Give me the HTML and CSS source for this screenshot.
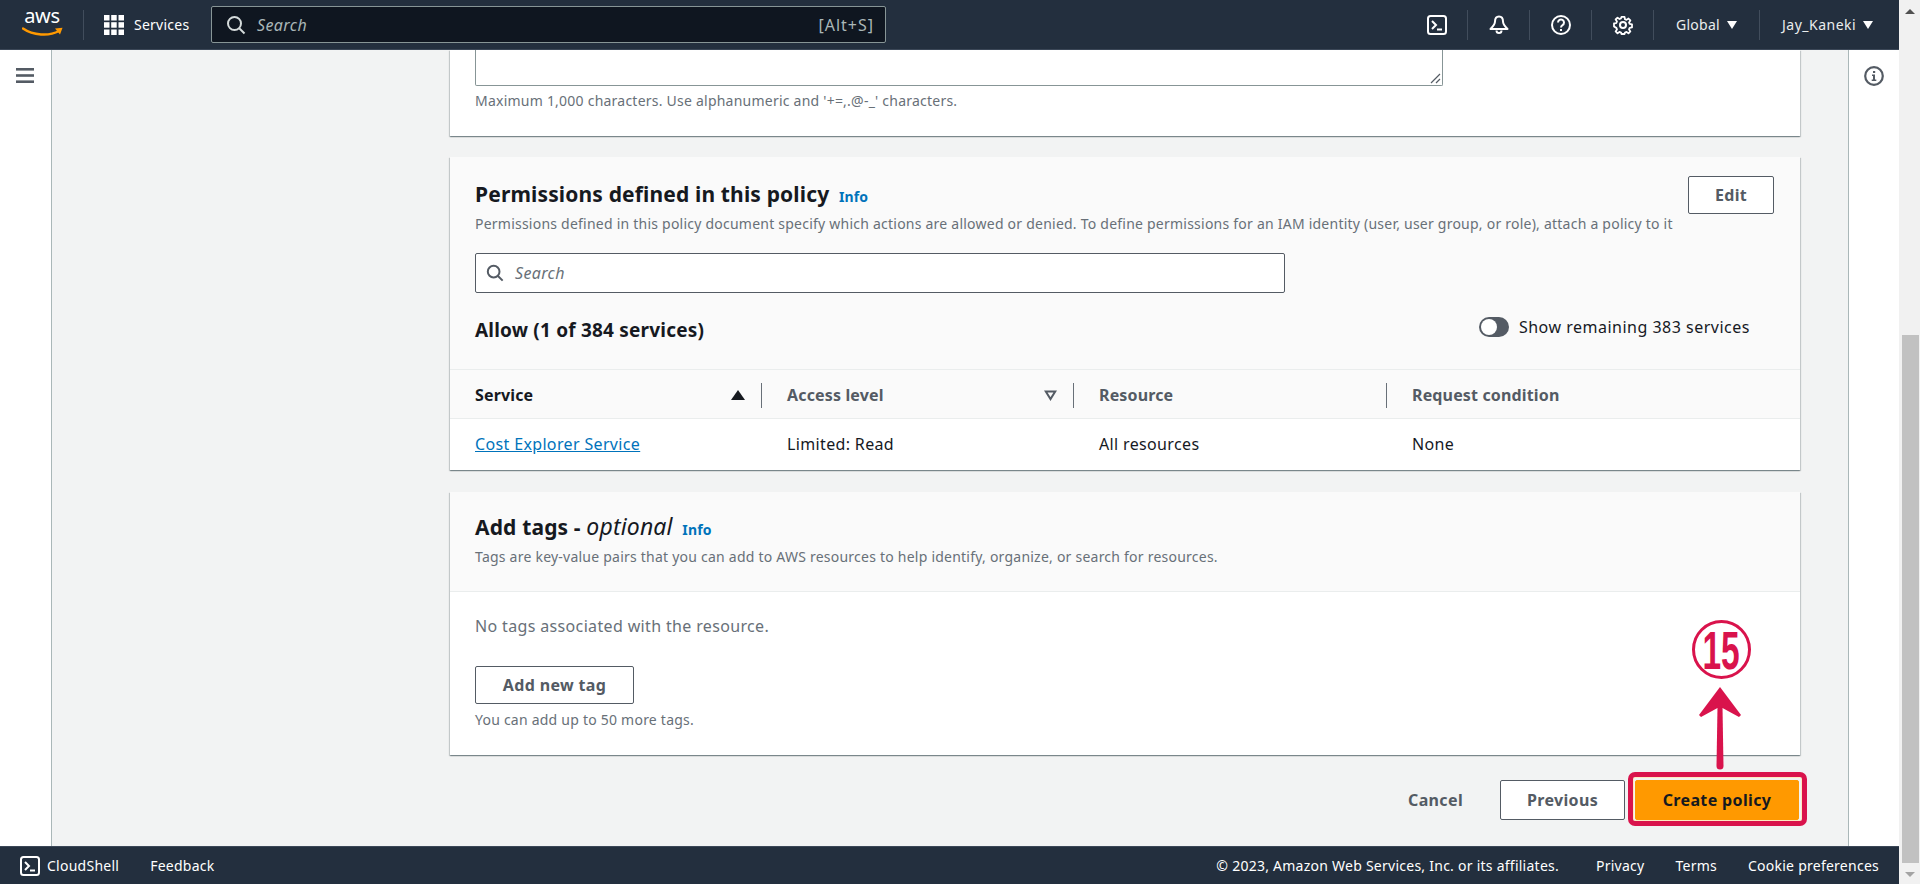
FILE: index.html
```html
<!DOCTYPE html>
<html lang="en">
<head>
    <meta charset="UTF-8">
    <title>Create policy | IAM</title>
    <link rel="stylesheet" href="styles.css">
</head>
<body>
    <div class="app">
        <header class="topbar">
            <div class="logo">
                <span class="logo-text">aws</span>
                <svg class="logo-smile" width="42" height="10" viewBox="0 0 42 10"><path d="M1 1.500C11 8.500 27 9.500 37 4" fill="none" stroke="#f90" stroke-width="2.400" stroke-linecap="round"/><path d="M33 1.500L40.500 .8 38 7.500" fill="#f90"/></svg>
            </div>
            <span class="topbar-sep sep-logo"></span>
            <svg class="grid-icon" width="20" height="20" viewBox="0 0 20 20" fill="#fff"><rect width="5.500" height="5.500"/><rect x="7.200" width="5.500" height="5.500"/><rect x="14.500" width="5.500" height="5.500"/><rect y="7.200" width="5.500" height="5.500"/><rect x="7.200" y="7.200" width="5.500" height="5.500"/><rect x="14.500" y="7.200" width="5.500" height="5.500"/><rect y="14.500" width="5.500" height="5.500"/><rect x="7.200" y="14.500" width="5.500" height="5.500"/><rect x="14.500" y="14.500" width="5.500" height="5.500"/></svg>
            <span class="services">Services</span>
            <div class="top-search">
                <svg width="20" height="20" viewBox="0 0 20 20" fill="none" stroke="#d5dbdb" stroke-width="2"><circle cx="8.500" cy="8.500" r="6.500"/><path d="M13 13l5.500 5.500"/></svg>
                <span class="top-search-text">Search</span>
                <span class="top-search-key">[Alt+S]</span>
            </div>
            <div class="top-right">
                <span class="top-item"><svg width="20" height="20" viewBox="0 0 20 20" fill="none" stroke="#fff" stroke-width="2"><rect x="1" y="1" width="18" height="18" rx="2.500"/><path d="M5 6l4 4-4 4M10 14.500h5"/></svg></span>
                <span class="topbar-sep"></span>
                <span class="top-item"><svg width="20" height="20" viewBox="0 0 20 20" fill="none" stroke="#fff" stroke-width="2" stroke-linejoin="round"><path d="M10 1.500c-3 0-4 2.500-4 5 0 3-2 5-4.500 7.500h17c-2.500-2.500-4.500-4.500-4.500-7.500 0-2.500-1-5-4-5z"/><path d="M7.500 15.500a2.500 2.500 0 0 0 5 0"/></svg></span>
                <span class="topbar-sep"></span>
                <span class="top-item"><svg width="20" height="20" viewBox="0 0 20 20" fill="none" stroke="#fff" stroke-width="2"><circle cx="10" cy="10" r="9"/><path d="M7 7.500a3 3 0 1 1 4.500 2.600c-1 .6-1.500 1-1.500 2.400"/><path d="M10 14v2"/></svg></span>
                <span class="topbar-sep"></span>
                <span class="top-item"><svg width="20" height="20" viewBox="0 0 20 20" fill="none" stroke="#fff" stroke-width="2" stroke-linejoin="round"><path d="M8.300 1h3.400l.5 2.600 1.700.7 2.200-1.500 2.100 2.100-1.500 2.200.7 1.700 2.600.5v3.400l-2.600.5-.7 1.700 1.500 2.200-2.100 2.100-2.200-1.500-1.700.7-.5 1.600H8.300l-.5-1.600-1.700-.7-2.200 1.500-2.100-2.100 1.500-2.200-.7-1.700L0 11.700V8.300l2.600-.5.7-1.700-1.500-2.200 2.100-2.100 2.200 1.500 1.700-.7z" transform="translate(1 1) scale(.9)"/><circle cx="10" cy="10" r="3"/></svg></span>
                <span class="topbar-sep"></span>
                <span class="top-menu top-global">Global <i class="caret"></i></span>
                <span class="topbar-sep"></span>
                <span class="top-menu top-user">Jay_Kaneki <i class="caret"></i></span>
            </div>
        </header>

        <div class="middle">
            <aside class="rail rail-left">
                <svg width="18" height="15" viewBox="0 0 18 15" fill="#545b64"><rect width="18" height="2.600"/><rect y="6.200" width="18" height="2.600"/><rect y="12.400" width="18" height="2.600"/></svg>
            </aside>

            <main class="content">
                <section class="card card-cut">
                    <div class="textarea-stub"><svg class="resize-grip" width="11" height="11" viewBox="0 0 11 11" stroke="#545b64" stroke-width="1.200"><path d="M1 10L10 1M6 10l4-4"/></svg></div>
                    <p class="hint">Maximum 1,000 characters. Use alphanumeric and '+=,.@-_' characters.</p>
                </section>

                <section class="card card-perms">
                    <div class="card-head perms-head">
                        <div class="perms-top">
                            <div>
                                <h2 class="card-title">Permissions defined in this policy <a class="info">Info</a></h2>
                                <p class="card-desc">Permissions defined in this policy document specify which actions are allowed or denied. To define permissions for an IAM identity (user, user group, or role), attach a policy to it</p>
                            </div>
                            <button class="btn btn-edit">Edit</button>
                        </div>
                        <div class="perm-search">
                            <svg width="18" height="18" viewBox="0 0 20 20" fill="none" stroke="#545b64" stroke-width="2.200"><circle cx="8.500" cy="8.500" r="6.500"/><path d="M13 13l5.500 5.500"/></svg>
                            <span>Search</span>
                        </div>
                        <div class="allow-row">
                            <h3 class="allow-title">Allow (1 of 384 services)</h3>
                            <div class="toggle-wrap"><span class="toggle"></span><span>Show remaining 383 services</span></div>
                        </div>
                    </div>
                    <div class="tbl tbl-head">
                        <div class="th th-active">Service <i class="sort-up"></i></div>
                        <div class="th">Access level <svg class="sort-down" width="13" height="11" viewBox="0 0 13 11" fill="none" stroke="#545b64" stroke-width="2"><path d="M1.800 1.500h9.400L6.500 9z"/></svg></div>
                        <div class="th">Resource</div>
                        <div class="th">Request condition</div>
                    </div>
                    <div class="tbl tbl-row">
                        <div class="td"><a class="link">Cost Explorer Service</a></div>
                        <div class="td">Limited: Read</div>
                        <div class="td">All resources</div>
                        <div class="td">None</div>
                    </div>
                </section>

                <section class="card card-tags">
                    <div class="card-head tags-head">
                        <h2 class="card-title">Add tags - <em>optional</em> <a class="info">Info</a></h2>
                        <p class="card-desc">Tags are key-value pairs that you can add to AWS resources to help identify, organize, or search for resources.</p>
                    </div>
                    <div class="tags-body">
                        <p class="no-tags">No tags associated with the resource.</p>
                        <button class="btn btn-add">Add new tag</button>
                        <p class="hint hint-tags">You can add up to 50 more tags.</p>
                    </div>
                </section>

                <div class="actions">
                    <button class="btn-cancel">Cancel</button>
                    <button class="btn btn-prev">Previous</button>
                    <button class="btn btn-create">Create policy</button>
                </div>
            </main>

            <aside class="rail rail-right">
                <svg width="20" height="20" viewBox="0 0 20 20"><circle cx="10" cy="10" r="8.800" fill="none" stroke="#545b64" stroke-width="2.200"/><path d="M8 8.500h3v5h1.300v1.500H7.700v-1.500H9V10H8zM9 5h2.200v2H9z" fill="#545b64"/></svg>
            </aside>
        </div>

        <footer class="footer">
            <svg width="20" height="20" viewBox="0 0 20 20" fill="none" stroke="#fff" stroke-width="2"><rect x="1" y="1" width="18" height="18" rx="2.500"/><path d="M5 6l4 4-4 4M10 14.500h5"/></svg>
            <span class="foot-shell">CloudShell</span>
            <span class="foot-feedback">Feedback</span>
            <span class="foot-copy">© 2023, Amazon Web Services, Inc. or its affiliates.</span>
            <span class="foot-link">Privacy</span>
            <span class="foot-link">Terms</span>
            <span class="foot-link">Cookie preferences</span>
        </footer>
    </div>

    <div class="scrollbar">
        <i class="scroll-up"></i>
        <span class="scroll-thumb"></span>
        <i class="scroll-down"></i>
    </div>

    <!-- annotation drawn over the screenshot -->
    <div class="mark-box"></div>
    <div class="mark-number"><span>15</span></div>
    <svg class="mark-arrow" width="44" height="84" viewBox="0 0 44 84"><path d="M19.500 21H24.500L25.500 80a3.500 3.500 0 0 1-7 0z" fill="#d9134c"/><path d="M22 1L43 29 41 31 24.500 22h-5L3 31 1 29z" fill="#d9134c"/></svg>
</body>
</html>
```

FILE: styles.css
```css
* {
    box-sizing: border-box;
}

html, body {
    height: 100%;
}

body {
    margin: 0;
    display: flex;
    overflow: hidden;
    font-family: "Noto Sans", "Open Sans", sans-serif;
    font-size: 16px;
    letter-spacing: .35px;
    color: #16191f;
    background: #f2f3f3;
}

p, h2, h3 {
    margin: 0;
}

button {
    font-family: inherit;
    letter-spacing: inherit;
}

.app {
    flex: 1;
    display: flex;
    flex-direction: column;
    min-width: 0;
}

/* top bar */
.topbar {
    height: 50px;
    flex: none;
    display: flex;
    align-items: center;
    background: #232f3e;
    border-bottom: 1px solid #3b4757;
    color: #fff;
    font-size: 14px;
    letter-spacing: .25px;
}

.logo {
    width: 40px;
    margin-left: 22px;
    height: 28px;
    position: relative;
}

.logo-text {
    display: block;
    font-size: 20px;
    line-height: 20px;
    text-align: center;
    margin-top: -5px;
    letter-spacing: -.3px;
}

.logo-smile {
    position: absolute;
    left: 0;
    top: 16px;
}

.topbar-sep {
    width: 1px;
    height: 30px;
    background: #414d5c;
    flex: none;
}

.sep-logo {
    margin-left: 21px;
}

.grid-icon {
    margin-left: 20px;
    flex: none;
}

.services {
    margin-left: 10px;
    width: 77px;
}

.top-search {
    width: 675px;
    height: 37px;
    display: flex;
    align-items: center;
    padding: 0 11px 0 14px;
    background: #0f1620;
    border: 1px solid #879596;
    border-radius: 2px;
    color: #aab7b8;
    font-size: 16px;
    letter-spacing: .4px;
}

.top-search-text {
    margin-left: 11px;
    font-style: italic;
}

.top-search-key {
    margin-left: auto;
    letter-spacing: 1px;
}

.top-right {
    margin-left: auto;
    display: flex;
    align-items: center;
}

.top-item {
    width: 61px;
    height: 20px;
    display: flex;
    justify-content: center;
}

.top-menu {
    display: flex;
    align-items: center;
    gap: 7px;
    padding: 0 20px 0 22px;
    color: #eaeded;
}

.top-global {
    width: 105px;
}

.top-user {
    width: 139px;
    letter-spacing: .5px;
}

.caret {
    width: 0;
    height: 0;
    border-left: 5.500px solid transparent;
    border-right: 5.500px solid transparent;
    border-top: 8px solid #fff;
}

/* middle area */
.middle {
    flex: 1;
    display: flex;
    min-height: 0;
    overflow: hidden;
}

.rail {
    flex: none;
    background: #fff;
    display: flex;
    justify-content: center;
    padding-top: 18px;
}

.rail-left {
    width: 52px;
    border-right: 1px solid #aab7b8;
    padding-right: 1px;
}

.rail-right {
    width: 51px;
    border-left: 1px solid #aab7b8;
    padding-top: 16px;
}

.content {
    flex: 1;
    padding: 0 49px 0 398px;
    min-width: 0;
}

/* cards */
.card {
    width: 1350px;
    background: #fff;
    box-shadow: 0 1px 1px 0 rgba(0,28,36,.3), 1px 1px 1px 0 rgba(0,28,36,.15), -1px 1px 1px 0 rgba(0,28,36,.15);
}

.card-cut {
    height: 86px;
    padding: 0 25px;
}

.textarea-stub {
    width: 968px;
    height: 36px;
    border: 1px solid #879596;
    border-top: 0;
    border-radius: 0 0 2px 2px;
    position: relative;
}

.resize-grip {
    position: absolute;
    right: 1px;
    bottom: 1px;
}

.hint {
    font-size: 14px;
    letter-spacing: .23px;
    line-height: 18px;
    color: #687078;
}

.card-cut .hint {
    margin-top: 6px;
}

.card-perms {
    margin-top: 21px;
}

.card-head {
    background: #fafafa;
    border-bottom: 1px solid #eaeded;
}

.perms-head {
    height: 213px;
    padding: 19px 26px 0 25px;
}

.perms-top {
    display: flex;
    justify-content: space-between;
    align-items: flex-start;
}

.card-title {
    font-size: 21px;
    letter-spacing: .15px;
    line-height: 24px;
    font-weight: 700;
    margin-top: 6px;
}

.card-title em {
    font-weight: 400;
    font-size: 23px;
}

.info {
    margin-left: 4px;
    font-size: 14px;
    font-weight: 700;
    color: #0073bb;
}

.card-desc {
    margin-top: 6px;
    font-size: 14px;
    letter-spacing: .23px;
    line-height: 18px;
    color: #687078;
    white-space: nowrap;
}

.btn {
    height: 38px;
    background: #fff;
    border: 1px solid #545b64;
    border-radius: 2px;
    color: #545b64;
    font-size: 16px;
    font-weight: 700;
    padding: 0 20px;
}

.btn-edit {
    width: 86px;
    flex: none;
}

.perm-search {
    width: 810px;
    height: 40px;
    margin-top: 20px;
    display: flex;
    align-items: center;
    gap: 11px;
    padding: 0 10px;
    background: #fff;
    border: 1px solid #545b64;
    border-radius: 2px;
    font-style: italic;
    color: #687078;
}

.allow-row {
    display: flex;
    justify-content: space-between;
    align-items: flex-start;
    margin-top: 24px;
    padding-right: 24px;
}

.allow-title {
    font-size: 19px;
    letter-spacing: .2px;
    line-height: 26px;
    font-weight: 700;
}

.toggle-wrap {
    display: flex;
    align-items: center;
    gap: 10px;
    height: 20px;
    color: #16191f;
    letter-spacing: .5px;
}

.toggle {
    width: 30px;
    height: 20px;
    border-radius: 10px;
    background: #545b64;
    position: relative;
}

.toggle::before {
    content: "";
    position: absolute;
    left: 2px;
    top: 2px;
    width: 16px;
    height: 16px;
    border-radius: 50%;
    background: #fff;
}

/* table */
.tbl {
    display: grid;
    grid-template-columns: 312px 312px 313px 1fr;
}

.tbl-head {
    height: 49px;
    padding-top: 2px;
    background: #fafafa;
    border-bottom: 1px solid #eaeded;
    align-items: center;
}

.th {
    height: 25px;
    line-height: 25px;
    padding: 0 14px 0 25px;
    font-weight: 700;
    letter-spacing: .15px;
    color: #545b64;
    display: flex;
    justify-content: space-between;
    align-items: center;
    border-right: 1px solid #687078;
}

.th:last-child {
    border-right: 0;
}

.th-active {
    color: #16191f;
}

.sort-up {
    width: 0;
    height: 0;
    border-left: 7px solid transparent;
    border-right: 7px solid transparent;
    border-bottom: 10px solid #16191f;
    margin-right: 2px;
}

.sort-down {
    margin-right: 2px;
}

.tbl-row {
    height: 51px;
    align-items: center;
    padding-bottom: 2px;
}

.td {
    padding-left: 25px;
}

.link {
    color: #0073bb;
    text-decoration: underline;
}

/* tags */
.card-tags {
    margin-top: 22px;
}

.tags-head {
    height: 100px;
    padding: 22px 25px 0;
}

.tags-head .card-title {
    margin-top: 0;
}

.tags-body {
    height: 163px;
    padding: 24px 25px 0;
}

.no-tags {
    line-height: 20px;
    color: #687078;
}

.btn-add {
    width: 159px;
    margin-top: 30px;
    display: block;
    padding: 0;
}

.hint-tags {
    margin-top: 7px;
}

/* bottom buttons */
.actions {
    display: flex;
    justify-content: flex-end;
    align-items: center;
    margin-top: 25px;
    width: 1349px;
}

.btn-cancel {
    border: 0;
    background: none;
    color: #545b64;
    font-size: 16px;
    font-weight: 700;
    padding: 0;
    margin-right: 37px;
}

.btn-prev {
    width: 125px;
    height: 40px;
    padding: 0;
    margin-right: 10px;
}

.btn-create {
    width: 164px;
    height: 40px;
    padding: 0;
    background: #f90;
    border-color: #f90;
    color: #16191f;
}

/* footer */
.footer {
    height: 38px;
    flex: none;
    display: flex;
    align-items: center;
    padding: 0 20px;
    background: #232f3e;
    border-top: 1px solid #3b4757;
    color: #fff;
    font-size: 14px;
    letter-spacing: .25px;
}

.foot-shell {
    margin-left: 7px;
}

.foot-feedback {
    margin-left: 31px;
}

.foot-copy {
    margin-left: auto;
    margin-right: 37px;
}

.foot-link {
    margin-left: 31px;
}

.foot-copy + .foot-link {
    margin-left: 0;
}

/* browser scrollbar */
.scrollbar {
    width: 21px;
    flex: none;
    display: flex;
    flex-direction: column;
    align-items: center;
    background: #f1f1f1;
    padding-top: 9px;
}

.scroll-up {
    width: 0;
    height: 0;
    border-left: 5px solid transparent;
    border-right: 5px solid transparent;
    border-bottom: 5px solid #505050;
}

.scroll-thumb {
    width: 17px;
    height: 528px;
    margin-top: 321px;
    background: #c1c1c1;
    margin-left: 2px;
}

.scroll-down {
    width: 0;
    height: 0;
    margin-top: 9px;
    border-left: 5px solid transparent;
    border-right: 5px solid transparent;
    border-top: 5px solid #a3a3a3;
}

/* annotation */
.mark-box {
    position: absolute;
    left: 1628px;
    top: 772px;
    width: 179px;
    height: 54px;
    border: 5px solid #d9134c;
    border-radius: 7px;
    box-shadow: inset 0 0 0 1px #ffe9c0;
}

.mark-number {
    position: absolute;
    left: 1692px;
    top: 620px;
    width: 59px;
    height: 59px;
    border: 3px solid #d9134c;
    border-radius: 50%;
    display: flex;
    align-items: center;
    justify-content: center;
    color: #d9134c;
}

.mark-number span {
    font-family: "Liberation Sans", sans-serif;
    font-weight: 700;
    font-size: 54px;
    line-height: 54px;
    letter-spacing: 0;
    transform: scaleX(.62);
}

.mark-arrow {
    position: absolute;
    left: 1698px;
    top: 686px;
}
```
